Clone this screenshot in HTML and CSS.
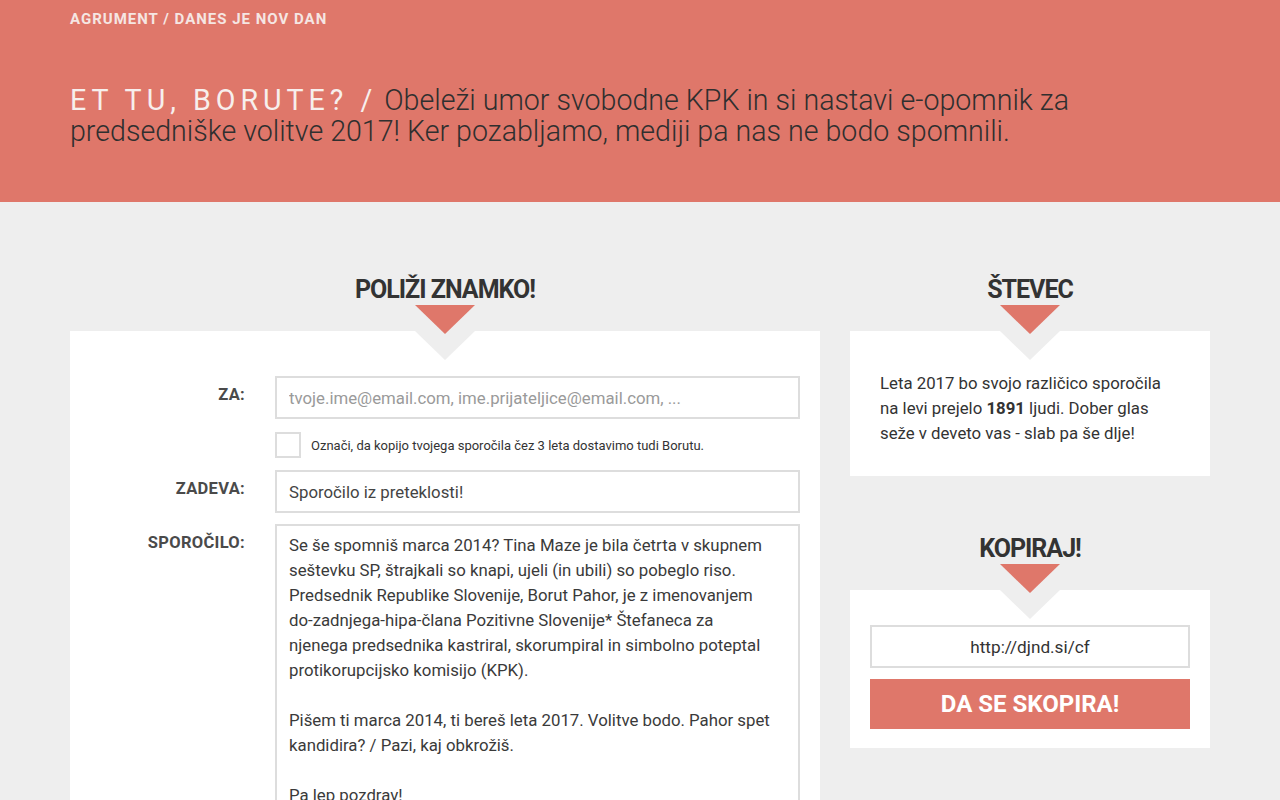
FILE: index.html
```html
<!DOCTYPE html>
<html lang="sl">
<head>
<meta charset="utf-8">
<title>Et tu, Borute?</title>
<link rel="stylesheet" href="styles.css">
</head>
<body>
<header class="top">
  <div class="crumbs">AGRUMENT / DANES JE NOV DAN</div>
  <h1 class="title"><span class="title-lead">ET TU, BORUTE? /</span> Obeleži umor svobodne KPK in si nastavi e-opomnik za predsedniške volitve 2017! Ker pozabljamo, mediji pa nas ne bodo spomnili.</h1>
</header>
<main class="content">
  <section class="col-main">
    <h2 class="sec-title">POLIŽI ZNAMKO!</h2>
    <div class="pointer"></div>
    <div class="card card-form">
      <div class="form-grid">
        <label class="f-label" for="to">ZA:</label>
        <input class="f-input" id="to" type="text" placeholder="tvoje.ime@email.com, ime.prijateljice@email.com, ...">
        <span></span>
        <label class="check-row"><span class="check-box"></span><span class="check-text">Označi, da kopijo tvojega sporočila čez 3 leta dostavimo tudi Borutu.</span></label>
        <label class="f-label" for="subj">ZADEVA:</label>
        <input class="f-input" id="subj" type="text" value="Sporočilo iz preteklosti!">
        <label class="f-label" for="msg">SPOROČILO:</label>
        <textarea class="f-area" id="msg">Se še spomniš marca 2014? Tina Maze je bila četrta v skupnem seštevku SP, štrajkali so knapi, ujeli (in ubili) so pobeglo riso. Predsednik Republike Slovenije, Borut Pahor, je z imenovanjem do‑zadnjega‑hipa‑člana Pozitivne Slovenije* Štefaneca za njenega predsednika kastriral, skorumpiral in simbolno poteptal protikorupcijsko komisijo (KPK).

Pišem ti marca 2014, ti bereš leta 2017. Volitve bodo. Pahor spet kandidira? / Pazi, kaj obkrožiš.

Pa lep pozdrav!</textarea>
      </div>
    </div>
  </section>
  <aside class="col-side">
    <h2 class="sec-title">ŠTEVEC</h2>
    <div class="pointer"></div>
    <div class="card card-counter">
      <p>Leta 2017 bo svojo različico sporočila na levi prejelo <b>1891</b> ljudi. Dober glas seže v deveto vas - slab pa še dlje!</p>
    </div>
    <h2 class="sec-title sec-title-next">KOPIRAJ!</h2>
    <div class="pointer"></div>
    <div class="card card-copy">
      <input class="f-input url-input" type="text" value="http://djnd.si/cf">
      <button class="copy-btn" type="button">DA SE SKOPIRA!</button>
    </div>
  </aside>
</main>
</body>
</html>
```

FILE: styles.css
```css
* { box-sizing: border-box; }
html, body { margin: 0; padding: 0; }
body {
  background: #eeeeee;
  font-family: Roboto, "Noto Sans", "DejaVu Sans", sans-serif;
  color: #333;
  min-height: 800px;
}

.top {
  background: #df776a;
  height: 202px;
  padding: 10px 70px 0;
}
.crumbs {
  font-size: 15px;
  font-weight: 700;
  letter-spacing: 1px;
  line-height: 18px;
  color: #f5e6e3;
}
.title {
  margin: 57px 0 0;
  font-size: 28.6px;
  font-weight: 300;
  line-height: 31px;
  color: #2f2f2f;
  max-width: 1020px;
}
.title-lead {
  color: #f7efed;
  font-weight: 400;
  letter-spacing: 5px;
}

.content {
  display: flex;
  gap: 30px;
  padding: 72px 70px 0;
  align-items: flex-start;
}
.col-main { width: 750px; flex: none; }
.col-side { width: 360px; flex: none; }

.sec-title {
  margin: 0;
  font-size: 25px;
  font-weight: 700;
  letter-spacing: -1px;
  line-height: 31px;
  text-align: center;
  color: #333;
}
.sec-title-next { margin-top: 57px; }

.pointer {
  position: relative;
  z-index: 2;
  height: 26px;
  display: flex;
  justify-content: center;
}
.pointer::after {
  content: "";
  width: 0;
  height: 0;
  border-left: 30px solid transparent;
  border-right: 30px solid transparent;
  border-top: 29px solid #df776a;
}

.card {
  position: relative;
  background: #fff;
}
.card::before {
  content: "";
  position: absolute;
  top: 0;
  left: 50%;
  margin-left: -30px;
  width: 0;
  height: 0;
  border-left: 30px solid transparent;
  border-right: 30px solid transparent;
  border-top: 29px solid #eeeeee;
}

.card-form {
  padding: 45px 20px 40px 0;
}
.form-grid {
  display: grid;
  grid-template-columns: 175px 525px;
  column-gap: 30px;
  row-gap: 11px;
}
.f-label {
  text-align: right;
  font-size: 16.5px;
  font-weight: 700;
  letter-spacing: 0.3px;
  line-height: 20px;
  padding-top: 9px;
  color: #4a4a4a;
}
.f-input {
  display: block;
  width: 100%;
  height: 43px;
  border: 2px solid #dddddd;
  padding: 0 12px;
  font-family: inherit;
  font-size: 16.8px;
  color: #444;
  background: #fff;
  outline: none;
}
.f-input::placeholder { color: #9a9a9a; }

.check-row {
  display: flex;
  align-items: center;
  gap: 10px;
  margin: 2px 0 1px;
}
.check-box {
  width: 26px;
  height: 26px;
  border: 2px solid #dddddd;
  flex: none;
}
.check-text {
  font-size: 13px;
  color: #333;
}

.f-area {
  display: block;
  width: 100%;
  height: 330px;
  border: 2px solid #dddddd;
  padding: 7px 28px 7px 12px;
  font-family: inherit;
  font-size: 16.8px;
  line-height: 25px;
  color: #3a3a3a;
  resize: none;
  outline: none;
  overflow: hidden;
}

.card-counter {
  padding: 40px 40px 30px 30px;
}
.card-counter p {
  margin: 0;
  font-size: 16.8px;
  line-height: 25px;
  color: #333;
}
.card-counter b { font-weight: 700; }

.card-copy {
  padding: 35px 20px 19px;
  display: flex;
  flex-direction: column;
  gap: 11px;
}
.url-input {
  text-align: center;
  font-size: 17.2px;
  color: #333;
}
.copy-btn {
  height: 50px;
  border: 0;
  background: #df776a;
  color: #fff;
  font-family: inherit;
  font-size: 24px;
  font-weight: 700;
  cursor: pointer;
}
```
